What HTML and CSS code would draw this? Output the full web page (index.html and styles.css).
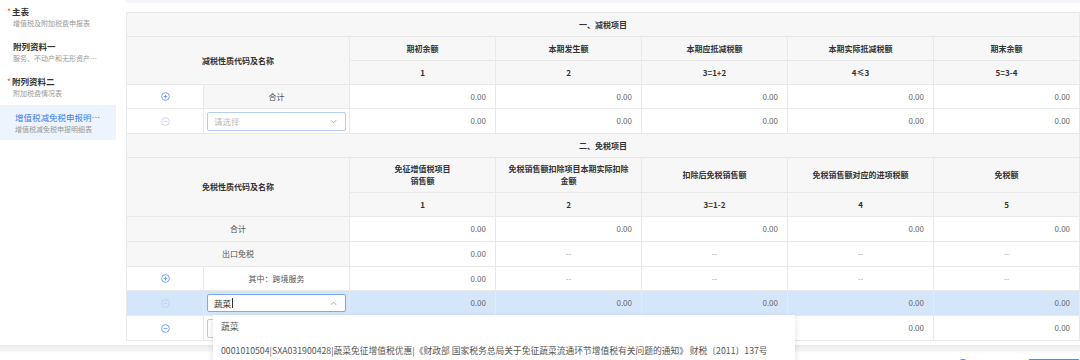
FILE: index.html
```html
<!DOCTYPE html>
<html lang="zh-CN">
<head>
  <meta charset="UTF-8" />
  <title>增值税减免税申报明细表</title>
  <link rel="stylesheet" href="styles.css">
</head>
<body>
  <div class="page">
    <div class="layout">
      <!-- 左侧报表导航 -->
      <aside class="nav">
        <div class="nav-item">
          <div class="nav-title"><span class="req">*</span>主表</div>
          <div class="nav-sub">增值税及附加税费申报表</div>
        </div>
        <div class="nav-item">
          <div class="nav-title">附列资料一</div>
          <div class="nav-sub">服务、不动产和无形资产扣除项目明细</div>
        </div>
        <div class="nav-item">
          <div class="nav-title"><span class="req">*</span>附列资料二</div>
          <div class="nav-sub">附加税费情况表</div>
        </div>
        <div class="nav-item active">
          <div class="nav-title">增值税减免税申报明细表</div>
          <div class="nav-sub">增值税减免税申报明细表</div>
        </div>
      </aside>

      <main class="content">
        <div class="topbar"></div>
        <table class="grid">
          <colgroup>
            <col class="c-icon"><col class="c-name">
            <col class="c-num"><col class="c-num"><col class="c-num"><col class="c-num"><col class="c-num">
          </colgroup>

          <!-- 一、减税项目 -->
          <tr class="h24">
            <td colspan="7" class="head">一、减税项目</td>
          </tr>
          <tr class="h24">
            <td colspan="2" rowspan="2" class="head">减税性质代码及名称</td>
            <td class="head">期初余额</td>
            <td class="head">本期发生额</td>
            <td class="head">本期应抵减税额</td>
            <td class="head">本期实际抵减税额</td>
            <td class="head">期末余额</td>
          </tr>
          <tr class="h24">
            <td class="head">1</td>
            <td class="head">2</td>
            <td class="head">3=1+2</td>
            <td class="head">4≤3</td>
            <td class="head">5=3-4</td>
          </tr>
          <tr class="h24">
            <td class="icon"><svg class="ico plus" viewBox="0 0 10 10"><circle cx="5" cy="5" r="4.3"/><path d="M3 5h4M5 3v4"/></svg></td>
            <td class="label">合计</td>
            <td class="num">0.00</td><td class="num">0.00</td><td class="num">0.00</td><td class="num">0.00</td><td class="num">0.00</td>
          </tr>
          <tr class="h25">
            <td class="icon"><svg class="ico minus off" viewBox="0 0 10 10"><circle cx="5" cy="5" r="4.3"/><path d="M3 5h4"/></svg></td>
            <td class="pick">
              <div class="select">
                <span class="placeholder">请选择</span>
                <svg class="chev" viewBox="0 0 8 5"><path d="M1 1l3 3 3-3"/></svg>
              </div>
            </td>
            <td class="num">0.00</td><td class="num">0.00</td><td class="num">0.00</td><td class="num">0.00</td><td class="num">0.00</td>
          </tr>

          <!-- 二、免税项目 -->
          <tr class="h24">
            <td colspan="7" class="head">二、免税项目</td>
          </tr>
          <tr class="h35">
            <td colspan="2" rowspan="2" class="head">免税性质代码及名称</td>
            <td class="head">免征增值税项目<br>销售额</td>
            <td class="head">免税销售额扣除项目本期实际扣除金额</td>
            <td class="head">扣除后免税销售额</td>
            <td class="head">免税销售额对应的进项税额</td>
            <td class="head">免税额</td>
          </tr>
          <tr class="h24">
            <td class="head">1</td>
            <td class="head">2</td>
            <td class="head">3=1-2</td>
            <td class="head">4</td>
            <td class="head">5</td>
          </tr>
          <tr class="h25">
            <td colspan="2" class="label">合计</td>
            <td class="num">0.00</td><td class="num">0.00</td><td class="num">0.00</td><td class="num">0.00</td><td class="num">0.00</td>
          </tr>
          <tr class="h25">
            <td colspan="2" class="label">出口免税</td>
            <td class="num">0.00</td><td class="dash">--</td><td class="dash">--</td><td class="dash">--</td><td class="dash">--</td>
          </tr>
          <tr class="h24">
            <td class="icon"><svg class="ico plus" viewBox="0 0 10 10"><circle cx="5" cy="5" r="4.3"/><path d="M3 5h4M5 3v4"/></svg></td>
            <td class="text">其中：跨境服务</td>
            <td class="num">0.00</td><td class="dash">--</td><td class="dash">--</td><td class="dash">--</td><td class="dash">--</td>
          </tr>
          <tr class="h25 selected">
            <td class="icon"><svg class="ico minus off" viewBox="0 0 10 10"><circle cx="5" cy="5" r="4.3"/><path d="M3 5h4"/></svg></td>
            <td class="pick">
              <div class="select focus">
                <span class="value">蔬菜</span><span class="caret"></span>
                <svg class="chev" viewBox="0 0 8 5"><path d="M1 4l3-3 3 3"/></svg>
                <ul class="dropdown">
                  <li>蔬菜</li>
                  <li>0001010504|SXA031900428|蔬菜免征增值税优惠|《财政部 国家税务总局关于免征蔬菜流通环节增值税有关问题的通知》 财税〔2011〕137号</li>
                </ul>
              </div>
            </td>
            <td class="num">0.00</td><td class="num">0.00</td><td class="num">0.00</td><td class="num">0.00</td><td class="num">0.00</td>
          </tr>
          <tr class="h25">
            <td class="icon"><svg class="ico minus" viewBox="0 0 10 10"><circle cx="5" cy="5" r="4.3"/><path d="M3 5h4"/></svg></td>
            <td class="pick">
              <div class="select"></div>
            </td>
            <td class="num">0.00</td><td class="num">0.00</td><td class="num">0.00</td><td class="num">0.00</td><td class="num">0.00</td>
          </tr>
        </table>
      </main>
    </div>

    <footer class="footer">
      <span class="help-dot"></span>
      <span class="btn"></span>
    </footer>
  </div>
</body>
</html>
```

FILE: styles.css
```css
body {
  margin: 0;
  font-family: "Noto Sans CJK SC", "Noto Sans", sans-serif;
  color: #333;
  background: #fff;
  overflow: hidden;
}

.page {
  width: 1080px;
  height: 360px;
  overflow: hidden;
}

.layout {
  display: flex;
}

/* 左侧导航 */
.nav {
  width: 116px;
  margin-right: 10px;
  flex: none;
}

.nav-item {
  height: 35px;
  box-sizing: border-box;
  padding: 5px 14px 0 7px;
}

.nav-title {
  font-size: 8.5px;
  line-height: 13px;
  font-weight: bold;
  color: #333;
  padding-left: 6px;
  white-space: nowrap;
  overflow: hidden;
  text-overflow: ellipsis;
}

.nav-title .req {
  color: #f05050;
  margin-left: -6px;
  margin-right: 1px;
  font-weight: normal;
}

.nav-sub {
  font-size: 7px;
  line-height: 11px;
  color: #999;
  padding-left: 6px;
  white-space: nowrap;
  overflow: hidden;
  text-overflow: ellipsis;
}

.nav-item.active {
  background: #eef4fe;
  padding-top: 6px;
  padding-left: 9px;
  padding-right: 12px;
}

.nav-item.active .nav-title {
  color: #3a7cf0;
  font-weight: normal;
}

/* 右侧表格 */
.content {
  flex: 1;
}

.topbar {
  height: 3px;
  background: #f4f6f9;
  margin-bottom: 9px;
}

.grid {
  border-collapse: collapse;
  table-layout: fixed;
  width: 953px;
  font-size: 8px;
  color: #666;
}

.c-icon { width: 77px; }
.c-name { width: 146px; }
.c-num { width: 146px; }

.grid td {
  border: 1px solid #e9e9e9;
  padding: 0 9px;
  line-height: 12px;
  text-align: center;
}

.h24 { height: 24px; }
.h25 { height: 25px; }
.h35 { height: 35px; }

.grid td.head {
  background: #f7f7f7;
  font-weight: bold;
  color: #333;
  font-size: 8px;
}

.grid td.label {
  background: #f7f7f7;
  color: #555;
}

.grid td.text {
  color: #555;
}

.grid td.num {
  text-align: right;
}

.grid td.dash {
  color: #aaa;
}

.grid td.icon {
  padding: 0;
}

.ico {
  width: 9px;
  height: 9px;
  display: block;
  margin: 0 auto;
  fill: none;
  stroke: #5b8ff2;
  stroke-width: 0.9;
}

.ico.off {
  stroke: #b9cff5;
}

.selected td {
  background: #d6e6fa;
}

.grid td.pick {
  padding: 0 3px;
}

/* 下拉选择框 */
.select {
  position: relative;
  height: 19px;
  box-sizing: border-box;
  border: 1px solid #b3cdf7;
  border-radius: 2px;
  background: #fff;
  display: flex;
  align-items: center;
  padding: 0 6px;
  font-size: 8.5px;
  text-align: left;
}

.select.focus {
  height: 18px;
  border-color: #7eaaf2;
}

.placeholder {
  color: #bbb;
  flex: 1;
}

.value {
  color: #333;
}

.caret {
  width: 1px;
  height: 10px;
  background: #333;
  margin-left: 1px;
}

.chev {
  width: 7px;
  height: 5px;
  margin-left: auto;
  margin-right: 2px;
  fill: none;
  stroke: #999;
  stroke-width: 1;
}

.dropdown {
  position: absolute;
  left: 5px;
  top: 20px;
  z-index: 5;
  width: 582px;
  margin: 0;
  padding: 0;
  list-style: none;
  background: #fff;
  box-shadow: 0 2px 6px rgba(0, 0, 0, 0.12);
}

.dropdown li {
  height: 24px;
  line-height: 24px;
  padding: 0 8px;
  font-size: 8.75px;
  color: #555;
  white-space: nowrap;
}

/* 底部操作栏 */
.footer {
  margin-top: 4px;
  height: 40px;
  background: linear-gradient(#e9e9e9, #f6f6f6 6px, #fff 8px);
  display: flex;
  align-items: flex-start;
  padding-top: 14px;
  box-sizing: border-box;
}

.help-dot {
  width: 12px;
  height: 12px;
  border-radius: 50%;
  background: #4a8af4;
  margin-left: 957px;
}

.btn {
  width: 50px;
  height: 20px;
  border: 1px solid #4a8af4;
  border-radius: 2px;
  background: #e8f0fe;
  margin-left: 59px;
}
```
